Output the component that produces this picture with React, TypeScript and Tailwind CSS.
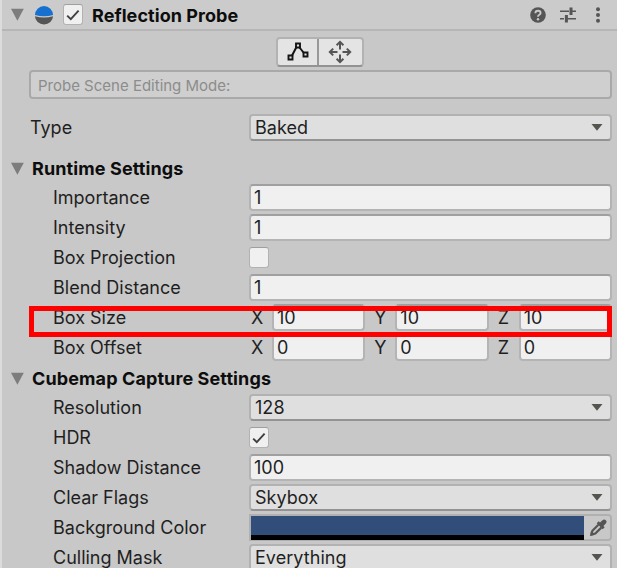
import type { ReactNode } from "react";

function Foldout() {
    return (
        <svg className="h-[13px] w-[14px] shrink-0" viewBox="0 0 14 13">
            <path d="M1 .8h12.8L7.4 12.8z" fill="#7d7d7d" />
        </svg>
    );
}

function Check({ checked }: { checked?: boolean }) {
    return (
        <div className="flex h-[21px] w-5 shrink-0 items-center justify-center rounded-[3px] border border-[#b2b2b2] border-t-[#9f9f9f] bg-[#f0f0f0]">
            {checked && (
                <svg className="h-3 w-[14px]" viewBox="0 0 14 12" fill="none" stroke="#404040" strokeWidth="1.9">
                    <path d="M1.2 6.6 4.8 10.2 12.6 1.6" />
                </svg>
            )}
        </div>
    );
}

function Field({ value }: { value: string }) {
    return (
        <div className="mt-[1px] flex h-[27px] min-w-0 flex-1 items-center rounded-[4px] border-2 border-[#b4b4b4] border-t-[#a0a0a0] bg-[#f0f0f0] pt-[1px] pl-[3px]">
            {value}
        </div>
    );
}

function Dropdown({ value }: { value: string }) {
    return (
        <div className="mt-[1px] flex h-[27px] min-w-0 flex-1 items-center justify-between rounded-[4px] border-2 border-[#b2b2b2] border-b-[#939393] bg-[#dfdfdf] pr-[7px] pl-[4px]">
            <span className="tracking-[0.05px]">{value}</span>
            <svg className="h-[7px] w-3" viewBox="0 0 12 7">
                <path d="M.5 0h11L6 6.8z" fill="#555550" />
            </svg>
        </div>
    );
}

function Vector({ values }: { values: [string, string, string] }) {
    return (
        <div className="flex min-w-0 flex-1">
            {["X", "Y", "Z"].map((axis, i) => (
                <div key={axis} className="flex min-w-0 flex-1 nth-[2]:ml-[7px] nth-[3]:ml-[7px]">
                    <span className="w-[23px] pl-[2px]">{axis}</span>
                    <Field value={values[i]} />
                </div>
            ))}
        </div>
    );
}

function Row({ label, indent = true, children }: { label: string; indent?: boolean; children: ReactNode }) {
    return (
        <div className="flex h-[30px] pr-[5px]">
            <div className={indent ? "w-[247px] shrink-0 pl-[51px]" : "w-[247px] shrink-0 pl-[28px]"}>{label}</div>
            {children}
        </div>
    );
}

function SectionTitle({ children }: { children: ReactNode }) {
    return (
        <div className="flex h-[30px] items-center gap-[8px] pl-[8px] font-bold text-[#0d0d0d]">
            <Foldout />
            <span className="pt-[1px] tracking-[0.11px]">{children}</span>
        </div>
    );
}

function Header() {
    return (
        <div className="flex h-[31px] items-center border-b-2 border-[#b6b6b6] bg-[#cbcbcb] pr-[15px] pl-[8px]">
            <Foldout />
            <svg className="ml-[10px] size-5" viewBox="0 0 20 20">
                <path d="M1 10a9 9 0 0 1 18 0q-9 2.4-18 0" fill="#1670cf" />
                <path d="M1 11.2q9 2.4 18 0a9 8.2 0 0 1-18 0" fill="#555" />
            </svg>
            <div className="ml-[9px]">
                <Check checked />
            </div>
            <span className="ml-[9px] pt-[2px] font-bold tracking-[0.06px] text-[#0d0d0d]">Reflection Probe</span>
            <div className="ml-auto flex items-center text-[#555]">
                <svg className="size-4" viewBox="0 0 16 16">
                    <circle cx="8" cy="8" r="7.8" fill="currentColor" />
                    <path d="M5.4 6.2Q5.5 3.8 8 3.8t2.6 2.2Q10.6 7.2 9 8 8 8.5 8 9.7" fill="none" stroke="#cbcbcb" strokeWidth="1.9" />
                    <circle cx="8" cy="12.2" r="1.2" fill="#cbcbcb" />
                </svg>
                <svg className="ml-[14px] h-4 w-4" viewBox="0 0 16 16" fill="none" stroke="currentColor">
                    <path d="M0 4.3h9M11 4.3h5M0 11.7h4M7 11.7h9" strokeWidth="1.6" />
                    <path d="M11 .5v7.5M6.4 8v7.5" strokeWidth="3" />
                </svg>
                <svg className="ml-[18px] h-4 w-[8px]" viewBox="0 0 8 16" fill="currentColor">
                    <circle cx="4" cy="2.2" r="2" />
                    <circle cx="4" cy="8" r="2" />
                    <circle cx="4" cy="13.8" r="2" />
                </svg>
            </div>
        </div>
    );
}

function Toolbar() {
    return (
        <div className="mt-[6px] ml-[274px] flex h-[30px] w-[88px] rounded-[4px] border-2 border-[#b2b2b2] border-b-[#939393] bg-[#e4e4e4]">
            <div className="flex w-[41px] items-center justify-center border-r-2 border-[#999]">
                <svg className="h-[20px] w-[22px]" viewBox="0 0 22 20" fill="#e4e4e4" stroke="#151515">
                    <path d="M4 15.5 10.5 3 18.5 13" fill="none" strokeWidth="2" />
                    <path d="M1.5 13.5h4v4h-4zM9 1.5h4v4H9zM16.5 10.5h4v4h-4z" strokeWidth="1.9" />
                </svg>
            </div>
            <div className="flex flex-1 items-center justify-center pr-[2px]">
                <svg className="size-6" viewBox="0 0 24 24" fill="none" stroke="#555" strokeWidth="2">
                    <path d="M12 9.5V2M12 14.5V22M9.5 12H2M14.5 12H22" />
                    <path d="M8.6 5.2 12 1.8l3.4 3.4M8.6 18.8l3.4 3.4 3.4-3.4M5.2 8.6 1.8 12l3.4 3.4M18.8 8.6l3.4 3.4-3.4 3.4" />
                </svg>
            </div>
        </div>
    );
}

function ColorField() {
    return (
        <div className="mt-[1px] flex h-[27px] flex-1 rounded-r-[4px] border-2 border-[#b0b0b0]">
            <div className="-mb-[1px] w-[333px] border-b-[5px] border-black bg-[#314d79]" />
            <div className="flex flex-1 items-center justify-center pl-[3px]">
                <svg className="size-[17px]" viewBox="0 0 17 17" fill="#555">
                    <path d="M10 3.6 12.2 1.4Q14.2-.4 15.8 1.2 17.4 2.8 15.6 4.8l-2.2 2.2 1.3 1.3-2 2-6-6 2-2z" />
                    <path d="M8.4 5.7 2.4 11.7 1.5 15.5l3.8-.9 6-6" fill="none" stroke="#555" strokeWidth="2.2" />
                    <path d="M.8 12.5 4.5 16 .3 16.7z" />
                </svg>
            </div>
        </div>
    );
}

export default function App() {
    return (
        <div className="relative h-[568px] w-[617px] overflow-hidden border-l-2 border-[#dcdcdc] bg-[#c8c8c8] font-['Inter',sans-serif] text-[18px] leading-[30px] text-[#1f1f1f]">
            <Header />
            <Toolbar />
            <div className="mt-[3px] mr-[5px] ml-[27px] flex h-[29px] items-center rounded-[4px] border-2 border-[#a9a9a9] bg-[#cfcfcf] pt-[2px] pl-[7px] text-[15px] text-[#8c8c8c]">
                Probe Scene Editing Mode:
            </div>
            <div className="mt-[14px]">
                <Row label="Type" indent={false}><Dropdown value="Baked" /></Row>
            </div>
            <div className="mt-[10px]">
                <SectionTitle>Runtime Settings</SectionTitle>
                <Row label="Importance"><Field value="1" /></Row>
                <Row label="Intensity"><Field value="1" /></Row>
                <Row label="Box Projection"><div className="pt-1"><Check /></div></Row>
                <Row label="Blend Distance"><Field value="1" /></Row>
                <Row label="Box Size"><Vector values={["10", "10", "10"]} /></Row>
                <Row label="Box Offset"><Vector values={["0", "0", "0"]} /></Row>
                <SectionTitle>Cubemap Capture Settings</SectionTitle>
                <Row label="Resolution"><Dropdown value="128" /></Row>
                <Row label="HDR"><div className="pt-1"><Check checked /></div></Row>
                <Row label="Shadow Distance"><Field value="100" /></Row>
                <Row label="Clear Flags"><Dropdown value="Skybox" /></Row>
                <Row label="Background Color"><ColorField /></Row>
                <Row label="Culling Mask"><Dropdown value="Everything" /></Row>
            </div>
            {/* highlight around the box size row */}
            <div className="absolute top-[306px] left-[27px] h-[31px] w-[583px] border-5 border-[#ff0000]" />
        </div>
    );
}
